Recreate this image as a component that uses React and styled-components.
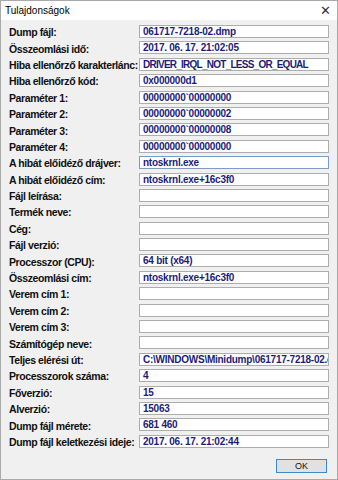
import React from "react";
import styled, { createGlobalStyle } from "styled-components";

const GlobalStyle = createGlobalStyle`
  html, body {
    margin: 0;
    padding: 0;
    background: #f0f0f0;
  }
`;

// [label, value, focused, tight]
const ROWS = [
  ["Dump fájl:", "061717-7218-02.dmp"],
  ["Összeomlási idő:", "2017. 06. 17. 21:02:05"],
  ["Hiba ellenőrző karakterlánc:", "DRIVER_IRQL_NOT_LESS_OR_EQUAL", false, true],
  ["Hiba ellenőrző kód:", "0x000000d1"],
  ["Paraméter 1:", "00000000`00000000"],
  ["Paraméter 2:", "00000000`00000002"],
  ["Paraméter 3:", "00000000`00000008"],
  ["Paraméter 4:", "00000000`00000000"],
  ["A hibát előidéző drájver:", "ntoskrnl.exe", true],
  ["A hibát előidéző cím:", "ntoskrnl.exe+16c3f0"],
  ["Fájl leírása:", ""],
  ["Termék neve:", ""],
  ["Cég:", ""],
  ["Fájl verzió:", ""],
  ["Processzor (CPU):", "64 bit (x64)"],
  ["Összeomlási cím:", "ntoskrnl.exe+16c3f0"],
  ["Verem cím 1:", ""],
  ["Verem cím 2:", ""],
  ["Verem cím 3:", ""],
  ["Számítógép neve:", ""],
  ["Teljes elérési út:", "C:\\WINDOWS\\Minidump\\061717-7218-02.dmp"],
  ["Processzorok száma:", "4"],
  ["Főverzió:", "15"],
  ["Alverzió:", "15063"],
  ["Dump fájl mérete:", "681 460"],
  ["Dump fájl keletkezési ideje:", "2017. 06. 17. 21:02:44"],
];

const Window = styled.div`
  width: 338px;
  height: 480px;
  box-sizing: border-box;
  border: 1px solid #aaaaaa;
  background: #f0f0f0;
  display: flex;
  flex-direction: column;
  font-family: "Liberation Sans", Arial, sans-serif;
`;

const TitleBar = styled.div`
  height: 19px;
  background: #ffffff;
  display: flex;
  align-items: center;
  justify-content: space-between;
  padding: 0 6px 0 4px;
  font-size: 10px;
  color: #000;
`;

const Close = styled.span`
  font-size: 13px;
  font-weight: 300;
  color: #333;
`;

const Grid = styled.div`
  display: grid;
  grid-template-columns: 130px 190px;
  grid-auto-rows: 16.4px;
  padding: 4px 0 0 8px;
`;

const Label = styled.div`
  font-size: 10.5px;
  letter-spacing: -0.4px;
  font-weight: bold;
  color: #111;
  display: flex;
  align-items: center;
  white-space: nowrap;
`;

const Field = styled.div`
  height: 13px;
  margin-top: 1px;
  box-sizing: border-box;
  border: 1px solid ${(p) => (p.$focused ? "#7a9cc6" : "#adadad")};
  background: #ffffff;
  font-size: 10px;
  letter-spacing: ${(p) => (p.$tight ? "-0.75px" : "-0.25px")};
  font-weight: bold;
  color: #1c1c78;
  padding: 0 3px;
  line-height: 11px;
  white-space: nowrap;
  overflow: hidden;
`;

const Footer = styled.div`
  display: flex;
  justify-content: flex-end;
  padding: 9px 10px 0 0;
`;

const Button = styled.button`
  width: 51px;
  height: 14px;
  box-sizing: border-box;
  border: 1px solid #3a8ad0;
  background: #e1e1e1;
  font-family: "Liberation Sans", Arial, sans-serif;
  font-size: 9px;
  color: #111;
  padding: 0;
`;

export default function App() {
  return (
    <>
      <GlobalStyle />
      <Window>
        <TitleBar>
          <span>Tulajdonságok</span>
          <Close>✕</Close>
        </TitleBar>
        <Grid>
          {ROWS.map(([label, value, focused, tight]) => (
            <React.Fragment key={label}>
              <Label>{label}</Label>
              <Field $focused={focused} $tight={tight}>
                {value}
              </Field>
            </React.Fragment>
          ))}
        </Grid>
        <Footer>
          <Button>OK</Button>
        </Footer>
      </Window>
    </>
  );
}
